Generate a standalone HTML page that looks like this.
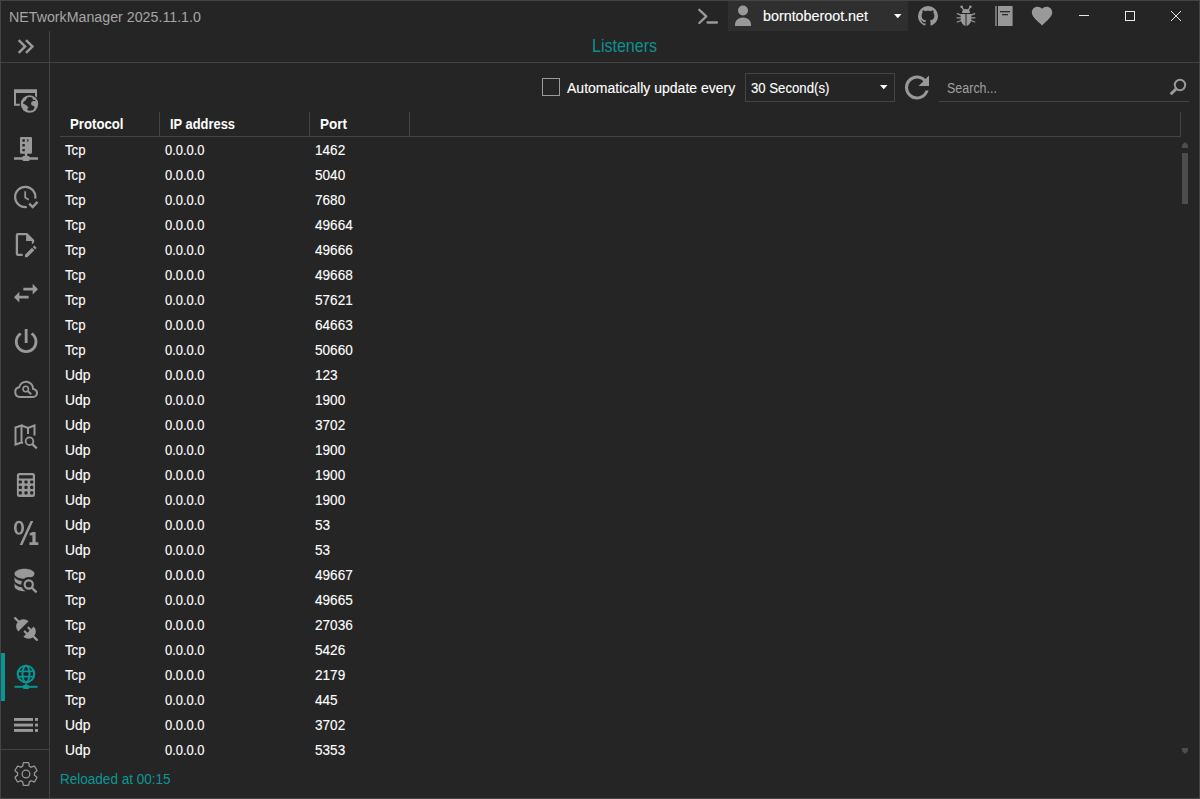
<!DOCTYPE html>
<html lang="en">
<head>
<meta charset="utf-8">
<title>NETworkManager 2025.11.1.0</title>
<style>
*{box-sizing:border-box;margin:0;padding:0}
html,body{width:1200px;height:799px;overflow:hidden;background:#252525}
body{font-family:"Liberation Sans",sans-serif;color:#fff;position:relative;font-size:14px}
.abs{position:absolute}
#win{position:absolute;left:0;top:0;width:1200px;height:799px;border:1px solid #444;background:#252525}
.t{position:absolute;white-space:nowrap;line-height:20px;height:20px;font-size:14px;transform-origin:0 50%}
.hl{position:absolute;height:1px;background:#444}
.vl{position:absolute;width:1px;background:#444}
svg{position:absolute;left:0;top:0;overflow:visible}
.row{position:absolute;left:0;height:25px;width:1130px}
.row span{-webkit-text-stroke:0.12px #fff;position:absolute;top:3px;line-height:20px;height:20px;font-size:14px;white-space:nowrap;transform-origin:0 50%}
.c1{left:65px}.c2{left:165px;transform:scaleX(.923)}.c3{left:315px;transform:scaleX(.97)}
.tcp{transform:scaleX(.94)}.udp{transform:scaleX(.99)}
.hd{position:absolute;top:114px;line-height:20px;height:20px;font-size:14px;font-weight:bold;white-space:nowrap;transform-origin:0 50%}
</style>

</head>
<body>
<div id="win"></div>

<!-- title bar -->
<div class="t" id="title" style="transform:scaleX(1.016);left:8.5px;top:7px;color:#a6a6a6">NETworkManager 2025.11.1.0</div>

<!-- structural lines -->
<div class="vl" style="left:49px;top:31px;height:767px"></div>
<div class="hl" style="left:1px;top:62px;width:1198px"></div>
<div class="hl" style="left:1px;top:749px;width:48px"></div>

<!-- header -->
<div class="t" id="hdr" style="transform:scaleX(0.89);left:592.3px;top:36px;color:#0c9191;font-size:18px">Listeners</div>

<!-- account box -->
<div class="abs" style="left:728px;top:1px;width:180px;height:30px;background:#2f2f2f"></div>
<div class="t" id="acct" style="-webkit-text-stroke:0.12px #fff;transform:scaleX(1.022);left:763px;top:6px">borntoberoot.net</div>

<!-- toolbar -->
<div class="abs" style="left:542px;top:78px;width:18px;height:18px;border:1px solid #9a9a9a"></div>
<div class="t" id="auto" style="-webkit-text-stroke:0.12px #fff;transform:scaleX(1.001);left:567px;top:78px">Automatically update every</div>
<div class="abs" style="left:745px;top:73px;width:150px;height:29px;border:1px solid #444"></div>
<div class="t" id="sec" style="-webkit-text-stroke:0.12px #fff;transform:scaleX(0.941);left:751px;top:78px">30 Second(s)</div>
<div class="t" id="srch" style="transform:scaleX(0.892);left:947px;top:78px;color:#a0a0a0">Search...</div>
<div class="hl" style="left:939px;top:101px;width:250px"></div>

<!-- table header -->
<div class="hl" style="left:60px;top:136px;width:1121px"></div>
<div class="vl" style="left:159px;top:112px;height:24px"></div>
<div class="vl" style="left:309px;top:112px;height:24px"></div>
<div class="vl" style="left:409px;top:112px;height:24px"></div>
<div class="vl" style="left:1180px;top:112px;height:24px"></div>
<div class="hd" style="left:70px;transform:scaleX(.942)" id="h1">Protocol</div>
<div class="hd" style="left:170px;transform:scaleX(.921)" id="h2">IP address</div>
<div class="hd" style="left:320px;transform:scaleX(.964)" id="h3">Port</div>

<!-- rows -->
<div id="rows">
<div class="row" style="top:137px"><span class="c1 tcp">Tcp</span><span class="c2">0.0.0.0</span><span class="c3">1462</span></div>
<div class="row" style="top:162px"><span class="c1 tcp">Tcp</span><span class="c2">0.0.0.0</span><span class="c3">5040</span></div>
<div class="row" style="top:187px"><span class="c1 tcp">Tcp</span><span class="c2">0.0.0.0</span><span class="c3">7680</span></div>
<div class="row" style="top:212px"><span class="c1 tcp">Tcp</span><span class="c2">0.0.0.0</span><span class="c3">49664</span></div>
<div class="row" style="top:237px"><span class="c1 tcp">Tcp</span><span class="c2">0.0.0.0</span><span class="c3">49666</span></div>
<div class="row" style="top:262px"><span class="c1 tcp">Tcp</span><span class="c2">0.0.0.0</span><span class="c3">49668</span></div>
<div class="row" style="top:287px"><span class="c1 tcp">Tcp</span><span class="c2">0.0.0.0</span><span class="c3">57621</span></div>
<div class="row" style="top:312px"><span class="c1 tcp">Tcp</span><span class="c2">0.0.0.0</span><span class="c3">64663</span></div>
<div class="row" style="top:337px"><span class="c1 tcp">Tcp</span><span class="c2">0.0.0.0</span><span class="c3">50660</span></div>
<div class="row" style="top:362px"><span class="c1 udp">Udp</span><span class="c2">0.0.0.0</span><span class="c3">123</span></div>
<div class="row" style="top:387px"><span class="c1 udp">Udp</span><span class="c2">0.0.0.0</span><span class="c3">1900</span></div>
<div class="row" style="top:412px"><span class="c1 udp">Udp</span><span class="c2">0.0.0.0</span><span class="c3">3702</span></div>
<div class="row" style="top:437px"><span class="c1 udp">Udp</span><span class="c2">0.0.0.0</span><span class="c3">1900</span></div>
<div class="row" style="top:462px"><span class="c1 udp">Udp</span><span class="c2">0.0.0.0</span><span class="c3">1900</span></div>
<div class="row" style="top:487px"><span class="c1 udp">Udp</span><span class="c2">0.0.0.0</span><span class="c3">1900</span></div>
<div class="row" style="top:512px"><span class="c1 udp">Udp</span><span class="c2">0.0.0.0</span><span class="c3">53</span></div>
<div class="row" style="top:537px"><span class="c1 udp">Udp</span><span class="c2">0.0.0.0</span><span class="c3">53</span></div>
<div class="row" style="top:562px"><span class="c1 tcp">Tcp</span><span class="c2">0.0.0.0</span><span class="c3">49667</span></div>
<div class="row" style="top:587px"><span class="c1 tcp">Tcp</span><span class="c2">0.0.0.0</span><span class="c3">49665</span></div>
<div class="row" style="top:612px"><span class="c1 tcp">Tcp</span><span class="c2">0.0.0.0</span><span class="c3">27036</span></div>
<div class="row" style="top:637px"><span class="c1 tcp">Tcp</span><span class="c2">0.0.0.0</span><span class="c3">5426</span></div>
<div class="row" style="top:662px"><span class="c1 tcp">Tcp</span><span class="c2">0.0.0.0</span><span class="c3">2179</span></div>
<div class="row" style="top:687px"><span class="c1 tcp">Tcp</span><span class="c2">0.0.0.0</span><span class="c3">445</span></div>
<div class="row" style="top:712px"><span class="c1 udp">Udp</span><span class="c2">0.0.0.0</span><span class="c3">3702</span></div>
<div class="row" style="top:737px"><span class="c1 udp">Udp</span><span class="c2">0.0.0.0</span><span class="c3">5353</span></div>
</div><!--endrows-->

<!-- scrollbar -->
<div class="abs" style="left:1182px;top:153px;width:6px;height:51px;background:#4d4d4d"></div>


<!-- title bar icons -->
<svg width="1200" height="799" viewBox="0 0 1200 799" id="ic-title">
<g fill="none" stroke="#999" stroke-width="2.3" stroke-linecap="round" stroke-linejoin="round">
<path d="M699.3,9.8L706.3,16.3L699.3,23"/>
<path d="M707.5,22.5H717"/>
</g>
<g fill="#999">
<circle cx="743" cy="10.5" r="5"/>
<path d="M735,26V24.5C735,20.5 738.5,17.6 743,17.6C747.500,17.600 751,20.500 751,24.500V26Z"/>
<path transform="translate(916,4)" d="M12,2A10,10 0 0,0 2,12C2,16.42 4.870,20.170 8.840,21.500C9.340,21.580 9.500,21.270 9.500,21C9.500,20.770 9.500,20.140 9.500,19.310C6.730,19.910 6.140,17.970 6.140,17.970C5.680,16.810 5.030,16.500 5.030,16.500C4.120,15.880 5.100,15.900 5.100,15.900C6.100,15.970 6.630,16.930 6.630,16.930C7.500,18.450 8.970,18 9.540,17.760C9.630,17.110 9.890,16.670 10.170,16.420C7.950,16.170 5.620,15.310 5.620,11.500C5.620,10.390 6,9.500 6.650,8.790C6.550,8.540 6.200,7.500 6.750,6.150C6.750,6.150 7.590,5.880 9.500,7.170C10.290,6.950 11.150,6.840 12,6.840C12.850,6.840 13.710,6.950 14.500,7.170C16.410,5.880 17.250,6.150 17.250,6.150C17.800,7.500 17.450,8.540 17.350,8.790C18,9.500 18.380,10.390 18.380,11.500C18.380,15.320 16.040,16.160 13.810,16.410C14.170,16.720 14.500,17.330 14.500,18.260C14.500,19.600 14.500,20.680 14.500,21C14.500,21.270 14.660,21.590 15.170,21.500C19.140,20.160 22,16.420 22,12A10,10 0 0,0 12,2Z"/>
<path transform="translate(1029.8,3.6) scale(1.02)" d="M12,21.35L10.55,20.03C5.4,15.36 2,12.27 2,8.5C2,5.41 4.42,3 7.5,3C9.24,3 10.91,3.81 12,5.08C13.09,3.81 14.76,3 16.5,3C19.58,3 22,5.41 22,8.5C22,12.27 18.6,15.36 13.45,20.03L12,21.35Z"/>
</g>
<!-- bug -->
<g fill="#999">
<path d="M962,13A4,4 0 0,1 970,13Z"/>
<path d="M960.700,14H965.500V26C962.500,25 960.700,22 960.700,19Z"/>
<path d="M971.300,14H966.500V26C969.500,25 971.300,22 971.300,19Z"/>
<circle cx="961.600" cy="6.700" r="1.300"/><circle cx="970.400" cy="6.700" r="1.300"/>
</g>
<g fill="none" stroke="#999" stroke-width="1.300" stroke-linecap="round">
<path d="M961.600,6.700L963.600,9.800M970.400,6.700L968.400,9.800"/>
<path d="M961,15.200L957.300,13.700M961,17.800H957M961,20.500L957.300,22M971,15.200L974.700,13.700M971,17.800H975M971,20.500L974.700,22"/>
</g>
<!-- book -->
<rect x="995" y="6" width="2" height="20" fill="#727272"/>
<rect x="998" y="6" width="14.600" height="20" fill="#979797"/>
<rect x="1000" y="11" width="10" height="1.300" fill="#2a2a2a"/>
<rect x="1002" y="14" width="6" height="1.300" fill="#2a2a2a"/>
<!-- arrows -->
<path d="M894,14H901.500L897.750,18.300Z" fill="#fff"/>
<!-- window buttons -->
<g fill="none" stroke="#e8e8e8" stroke-width="1">
<path d="M1079,15.500H1089"/>
<rect x="1125.500" y="11.500" width="9" height="9"/>
<path d="M1171,11L1181,21M1181,11L1171,21"/>
</g>
</svg>

<!-- toolbar icons -->
<svg width="1200" height="799" viewBox="0 0 1200 799" id="ic-tool">
<path d="M880,85H887.500L883.750,89.300Z" fill="#fff"/>
<path transform="translate(899,69.500) scale(1.500)" fill="#999" d="M17.65,6.35C16.2,4.9 14.21,4 12,4A8,8 0 0,0 4,12A8,8 0 0,0 12,20C15.73,20 18.84,17.45 19.73,14H17.65C16.83,16.33 14.61,18 12,18A6,6 0 0,1 6,12A6,6 0 0,1 12,6C13.66,6 15.14,6.69 16.220,7.780L13,11H20V4L17.650,6.350Z"/>
<circle cx="1180" cy="85" r="5.200" fill="none" stroke="#999" stroke-width="2"/>
<path d="M1176,89L1171.500,93.300" fill="none" stroke="#999" stroke-width="3" stroke-linecap="round"/>
<!-- scrollbar arrows -->
<path d="M1182,148V145L1185,142L1188,145V148Z" fill="#4d4d4d"/>
<path d="M1182,748V751L1185,754L1188,751V748Z" fill="#4d4d4d"/>
</svg>


<!-- sidebar -->
<div class="abs" style="left:1px;top:653px;width:4px;height:48px;background:#079595"></div>
<svg width="1200" height="799" viewBox="0 0 1200 799" id="ic-side">
<g fill="#999">
<!-- expand -->
<path transform="translate(11,31.860) scale(1.220)" d="M5.59,7.41L7,6L13,12L7,18L5.59,16.59L10.17,12L5.59,7.41M11.59,7.41L13,6L19,12L13,18L11.59,16.59L16.17,12L11.59,7.41Z"/>
<!-- 1 dashboard: window + earth -->
<path d="M14,89.300H37V101H35V93H16V103.800H22V105.800H14Z"/>
<circle cx="29.500" cy="104" r="9.800" fill="#252525"/>
<circle cx="29.500" cy="104" r="8.700"/>
<path fill="#252525" d="M27,97.700Q29.500,96.600 32.200,97.600L33,99.800L35.200,100.100L35.500,100.900L33,101.100L31.500,102.100L31,104L32,105.500L34.100,106L34.500,108L33,110.200Q30.500,111 28.500,110.500L27,109.500L28.500,107.200L26,105L23,103.500L23.500,102L26,100Z"/>
<!-- 2 server-network -->
<path transform="translate(11.600,134.500) scale(1.200)" d="M13,18H14A1,1 0 0,1 15,19H22V21H15A1,1 0 0,1 14,22H10A1,1 0 0,1 9,21H2V19H9A1,1 0 0,1 10,18H11V16H8A1,1 0 0,1 7,15V3A1,1 0 0,1 8,2H16A1,1 0 0,1 17,3V15A1,1 0 0,1 16,16H13V18M13,6H14V4H13V6M9,4V6H11V4H9M9,8V10H11V8H9M9,12V14H11V12H9Z"/>
</g>
<!-- 3 clock-check -->
<g fill="none" stroke="#999">
<path d="M35.300,198.600A10.150,10.150 0 1,0 26.800,207.000" stroke-width="2.200"/>
<path d="M25.200,191.300V197.600L28.700,199.700" stroke-width="1.700"/>
<path d="M29.200,203.600L32.700,207.100L37.500,201.900" stroke-width="2.300"/>
</g>
<g fill="#999">
<!-- 4 file-edit-outline -->
<path transform="translate(11.150,230.700) scale(1.150)" d="M10,20H6V4H13V9H18V12.100L20,10.100V8L14,2H6A2,2 0 0,0 4,4V20A2,2 0 0,0 6,22H10V20M20.200,13C20.300,13 20.500,13.100 20.600,13.200L21.900,14.500C22.100,14.700 22.100,15.100 21.900,15.300L20.900,16.300L18.800,14.200L19.800,13.200C19.900,13.100 20,13 20.200,13M20.200,16.900L14.100,23H12V20.900L18.100,14.800L20.200,16.900Z"/>
<!-- 5 swap-horizontal -->
<path transform="translate(10,277.200) scale(1.333)" d="M21,9L17,5V8H10V10H17V13M7,11L3,15L7,19V16H14V14H7V11Z"/>
<!-- 6 power -->
<path transform="translate(9.200,324.760) scale(1.412)" d="M16.560,5.440L15.110,6.890C16.840,7.940 18,9.830 18,12A6,6 0 0,1 12,18A6,6 0 0,1 6,12C6,9.830 7.160,7.940 8.880,6.880L7.440,5.440C5.360,6.880 4,9.280 4,12A8,8 0 0,0 12,20A8,8 0 0,0 20,12C20,9.280 18.640,6.880 16.560,5.440M13,3H11V13H13"/>
</g>
<!-- 7 cloud-search-outline -->
<g fill="none" stroke="#999">
<path d="M19.900,397A4.900,4.900 0 0,1 19.200,387.300A7,7 0 0,1 33.050,389A4,4 0 0,1 33,397Z" stroke-width="2" stroke-linejoin="round"/>
<circle cx="25.750" cy="389" r="2.700" stroke-width="1.600"/>
<path d="M27.800,391.200L31.300,394.200" stroke-width="2"/>
</g>
<!-- 8 map-search-outline -->
<g fill="none" stroke="#999">
<path d="M15.500,427.500L21.500,425.500V442.500L15.500,444.500ZM21.500,442.500L23,443M21.500,425.500L28,428L34.500,425.500V435.500M28,428V434" stroke-width="2" stroke-linejoin="miter"/>
<circle cx="29.500" cy="441.250" r="3.850" stroke-width="1.800"/>
<path d="M32.300,444.100L36.800,448.400" stroke-width="2.200"/>
</g>
<!-- 9 calculator -->
<path fill="#999" fill-rule="evenodd" d="M19.400,472.900H32.500A2.500,2.500 0 0,1 35,475.400V494.500A2.500,2.500 0 0,1 32.500,497H19.400A2.500,2.500 0 0,1 16.900,494.500V475.400A2.500,2.500 0 0,1 19.400,472.900Z
M19.700,475.200H32.200A0.600,0.600 0 0,1 32.800,475.800V478A0.600,0.600 0 0,1 32.200,478.600H19.700A0.600,0.600 0 0,1 19.100,478V475.800A0.600,0.600 0 0,1 19.700,475.200Z
M18.700,481.400a1,1 0 0,1 1,-1h1.200a1,1 0 0,1 1,1v1.200a1,1 0 0,1 -1,1h-1.200a1,1 0 0,1 -1,-1Z
M24.400,481.400a1,1 0 0,1 1,-1h1.200a1,1 0 0,1 1,1v1.200a1,1 0 0,1 -1,1h-1.200a1,1 0 0,1 -1,-1Z
M30.100,481.400a1,1 0 0,1 1,-1h1.200a1,1 0 0,1 1,1v1.200a1,1 0 0,1 -1,1h-1.200a1,1 0 0,1 -1,-1Z
M18.700,486.700a1,1 0 0,1 1,-1h1.200a1,1 0 0,1 1,1v1.200a1,1 0 0,1 -1,1h-1.200a1,1 0 0,1 -1,-1Z
M24.400,486.700a1,1 0 0,1 1,-1h1.200a1,1 0 0,1 1,1v1.200a1,1 0 0,1 -1,1h-1.200a1,1 0 0,1 -1,-1Z
M30.100,486.700a1,1 0 0,1 1,-1h1.200a1,1 0 0,1 1,1v1.200a1,1 0 0,1 -1,1h-1.200a1,1 0 0,1 -1,-1Z
M18.700,492.300a1,1 0 0,1 1,-1h1.200a1,1 0 0,1 1,1v1.200a1,1 0 0,1 -1,1h-1.200a1,1 0 0,1 -1,-1Z
M24.400,492.300a1,1 0 0,1 1,-1h1.200a1,1 0 0,1 1,1v1.200a1,1 0 0,1 -1,1h-1.200a1,1 0 0,1 -1,-1Z
M30.100,492.300a1,1 0 0,1 1,-1h1.200a1,1 0 0,1 1,1v1.200a1,1 0 0,1 -1,1h-1.200a1,1 0 0,1 -1,-1Z"/>
<!-- 10 zero / one -->
<path fill="#999" fill-rule="evenodd" d="M19,520.800C22,520.800 24,523.600 24,527.800C24,532 22,534.800 19,534.800C16,534.800 14,532 14,527.800C14,523.600 16,520.800 19,520.800ZM19,522.900C17.500,522.900 16.600,524.800 16.600,527.800C16.600,530.800 17.500,532.700 19,532.700C20.500,532.700 21.400,530.800 21.400,527.800C21.400,524.800 20.500,522.900 19,522.900Z"/>
<path fill="#999" d="M30.600,521H33.300L22.400,545H19.700Z"/>
<path fill="#999" d="M32.400,532H35.600V542.300H38.300V545H29.500V542.300H32.400V535.200L29.700,535.600V533.200Z"/>
<!-- 11 database-search -->
<path fill="#999" transform="translate(9.500,565) scale(1.250)" d="M12,3C7.580,3 4,4.790 4,7C4,9.210 7.580,11 12,11C16.420,11 20,9.210 20,7C20,4.790 16.420,3 12,3M4,9V12C4,14.210 7.580,16 12,16C16.420,16 20,14.210 20,12V9C20,11.210 16.420,13 12,13C7.580,13 4,11.210 4,9M4,14V17C4,19.210 7.580,21 12,21C16.420,21 20,19.210 20,17V14C20,16.210 16.420,18 12,18C7.580,18 4,16.210 4,14Z"/>
<circle cx="28.750" cy="584.500" r="7.500" fill="#252525"/>
<rect x="30.500" y="577.400" width="8" height="16" fill="#252525"/>
<path d="M30,586L38,593.500" stroke="#252525" stroke-width="5" fill="none"/>
<g fill="none" stroke="#999">
<circle cx="28.750" cy="584.500" r="4.100" stroke-width="2.200"/>
<path d="M31.700,587.600L36.600,592.400" stroke-width="2.300"/>
</g>
<!-- 12 plug disconnected -->
<g transform="translate(26,629) rotate(45)">
<path fill="#999" d="M-3.600,-7.300A7.300,7.300 0 0,0 -3.600,7.300Z"/>
<path fill="#999" d="M3.600,-7.300A7.300,7.300 0 0,1 3.600,7.300Z"/>
<path fill="none" stroke="#999" stroke-width="2.200" stroke-linecap="round" d="M-10.500,0H-15.400M10.500,0H15.400M4,-2.650H0.800M4,2.650H0.800"/>
</g>
<!-- 13 listeners (active) -->
<g fill="none" stroke="#079595">
<circle cx="26" cy="674" r="8.300" stroke-width="2.100"/>
<ellipse cx="26" cy="674" rx="3.500" ry="8.300" stroke-width="1.900"/>
<path d="M18.200,671.300H33.800M18.200,676.700H33.800" stroke-width="1.800"/>
<path d="M26,682.500V686" stroke-width="1.600"/>
<path d="M14.500,686.800H37.500" stroke-width="2"/>
</g>
<rect x="23" y="685" width="6" height="4" rx="0.800" fill="#079595"/>
<!-- 14 list -->
<g fill="#999">
<rect x="14" y="718" width="19" height="2.900"/><rect x="35" y="718" width="3" height="2.900"/>
<rect x="14" y="723.600" width="19" height="2.900"/><rect x="35" y="723.600" width="3" height="2.900"/>
<rect x="14" y="729" width="19" height="2.900"/><rect x="35" y="729" width="3" height="2.900"/>
</g>
<!-- settings -->
<g fill="none" stroke="#999" stroke-width="1.100" transform="translate(12.440,760.440) scale(1.130)">
<path d="M10,22C9.750,22 9.540,21.820 9.500,21.580L9.130,18.930C8.500,18.680 7.960,18.340 7.440,17.940L4.950,18.950C4.730,19.030 4.460,18.950 4.340,18.730L2.340,15.270C2.210,15.050 2.270,14.780 2.460,14.630L4.570,12.970L4.500,12L4.570,11L2.460,9.370C2.270,9.220 2.210,8.950 2.340,8.730L4.340,5.270C4.460,5.050 4.730,4.960 4.950,5.050L7.440,6.050C7.960,5.660 8.500,5.320 9.130,5.070L9.500,2.420C9.540,2.180 9.750,2 10,2H14C14.250,2 14.460,2.180 14.500,2.420L14.870,5.070C15.500,5.320 16.040,5.660 16.560,6.050L19.050,5.050C19.270,4.960 19.540,5.050 19.660,5.270L21.660,8.730C21.790,8.950 21.730,9.220 21.540,9.370L19.430,11L19.500,12L19.430,13L21.540,14.630C21.730,14.780 21.790,15.050 21.660,15.270L19.660,18.730C19.540,18.950 19.270,19.040 19.050,18.950L16.560,17.950C16.040,18.340 15.500,18.680 14.870,18.930L14.500,21.580C14.460,21.820 14.250,22 14,22H10Z"/>
<circle cx="12" cy="12" r="3.400"/>
</g>
</svg>

<!-- status -->
<div class="t" id="status" style="transform:scaleX(0.966);left:60px;top:769px;color:#0c9797">Reloaded at 00:15</div>

</body>
</html>
